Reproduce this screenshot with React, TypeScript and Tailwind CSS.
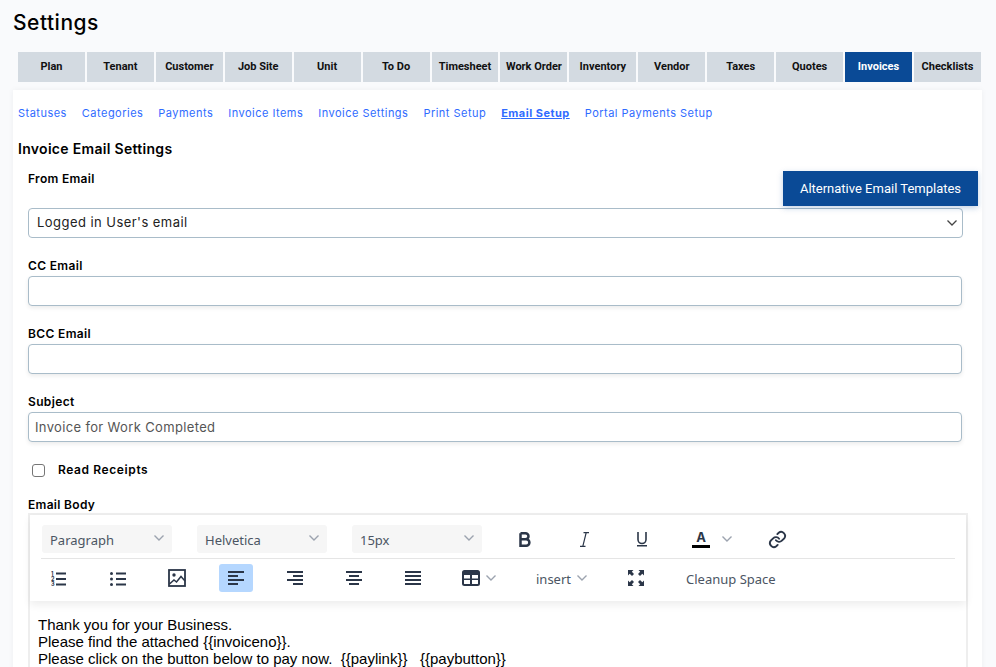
import React from "react";

const tabs = ["Plan","Tenant","Customer","Job Site","Unit","To Do","Timesheet","Work Order","Inventory","Vendor","Taxes","Quotes","Invoices","Checklists"];
const links = ["Statuses","Categories","Payments","Invoice Items","Invoice Settings","Print Setup","Email Setup","Portal Payments Setup"];

const Chevron = ({ className = "" }: { className?: string }) => (
  <svg width="10" height="6" viewBox="0 0 10 6" fill="none" stroke="#9ca3af" strokeWidth="1.4" className={className}><path d="M.5.5L5 5 9.5.5" /></svg>
);
const C = "#2b3648";
const Bars = ({ rows }: { rows: [number, number][] }) => (
  <svg width="16" height="14" viewBox="0 0 16 14" fill={C} className="block">
    {rows.map(([x, w], i) => <rect key={i} x={x} y={i * 4} width={w} height="2" />)}
  </svg>
);

const Field = ({ label, value }: { label: string; value?: string }) => (
  <div className="mt-[19px] w-[934px]">
    <div className="text-[12px] leading-[18px] font-semibold text-black tracking-[0.35px]">{label}</div>
    <div className="mt-[1px] h-[30px] rounded-[4px] border border-[#a9bcc9] bg-white shadow-[0_2px_4px_rgba(0,0,0,0.08)] pl-[6px] pt-[2px] flex items-center text-[13px] text-[#555] tracking-[0.35px]">{value}</div>
  </div>
);

const Select = ({ label }: { label: string }) => (
  <div className="w-[130px] h-[28px] rounded-[3px] bg-[#f6f6f6] flex items-center justify-between pl-[8px] pr-[8px] text-[13px] text-[#4b5563] font-['Noto_Sans',sans-serif]">
    <span className="mt-[4px]">{label}</span><Chevron className="mb-[2px]" />
  </div>
);

export default function App() {
  return (
    <div className="w-[996px] h-[667px] overflow-hidden bg-[#f9fafc] font-['Inter','Noto_Sans',sans-serif]">
      <h1 className="pl-[13px] pt-[10px] text-[21px] leading-[26px] font-medium text-black tracking-[0.5px]">Settings</h1>
      <div className="ml-[18px] mt-[16px] w-[963px] flex gap-[2px] font-['Roboto',sans-serif]">
        {tabs.map((t) => (
          <div key={t} className={`flex-1 h-[30px] flex items-center justify-center text-[11px] font-bold whitespace-nowrap ${t === "Invoices" ? "bg-[#0a4a96] text-white" : "bg-[#d3dae1] text-[#111]"}`}>{t}</div>
        ))}
      </div>
      <div className="ml-[13px] mt-[8px] w-[969px] h-[600px] bg-white shadow-[0_0_6px_rgba(0,0,0,0.05)] overflow-hidden">
        <div className="pl-[5px] pt-[16px] flex gap-[15px] text-[11px] leading-[14px] text-[#2f6bff] tracking-[0.48px]">
          {links.map((l) => (
            <span key={l} className={l === "Email Setup" ? "font-bold underline" : ""}>{l}</span>
          ))}
        </div>
        <h2 className="pl-[5px] mt-[20px] text-[14px] leading-[18px] font-semibold text-black tracking-[0.3px]">Invoice Email Settings</h2>
        <div className="pl-[15px]">
          <div className="flex items-start justify-between w-[950px] mt-[13px]">
            <div className="-mt-[1px] text-[12px] leading-[18px] font-semibold text-black tracking-[0.3px]">From Email</div>
            <div className="w-[195px] h-[35px] bg-[#0a4a96] text-white flex items-center justify-center text-[13px] font-['Roboto',sans-serif] shadow-[0_2px_6px_rgba(10,74,150,0.25)]">Alternative Email Templates</div>
          </div>
          <div className="mt-[2px] w-[935px] h-[30px] rounded-[4px] border border-[#a9bcc9] flex items-center justify-between pl-[8px] pr-[5px] text-[13px] text-[#222] tracking-[0.45px]">
            <span>Logged in User's email</span>
            <svg width="10" height="6" viewBox="0 0 10 6" fill="none" stroke="#444" strokeWidth="1.3"><path d="M.5.5L5 5 9.5.5" /></svg>
          </div>
          <Field label="CC Email" />
          <Field label="BCC Email" />
          <Field label="Subject" value="Invoice for Work Completed" />
          <div className="mt-[20px] flex items-center h-[16px]">
            <div className="ml-[4px] w-[13px] h-[13px] rounded-[3px] border-[1.5px] border-[#767676] bg-white" />
            <span className="ml-[13px] text-[12px] font-semibold text-black tracking-[0.6px]">Read Receipts</span>
          </div>
          <div className="mt-[18px] text-[12px] leading-[18px] font-semibold text-black tracking-[0.3px]">Email Body</div>
          <div className="-mt-[1px] w-[940px] h-[200px] border-2 border-[#eeeeee] border-b-0">
            <div className="h-[86px] bg-white shadow-[0_4px_8px_rgba(0,0,0,0.07)] px-[12px] pt-[10px] font-['Noto_Sans',sans-serif]">
              <div className="flex items-center h-[28px]">
                <Select label="Paragraph" />
                <div className="ml-[25px]"><Select label="Helvetica" /></div>
                <div className="ml-[25px]"><Select label="15px" /></div>
                <svg className="ml-[37px]" width="12" height="15" viewBox="0 0 12 15" fill="none" stroke={C} strokeWidth="2.5"><path d="M1.5 1.300h5a3 3 0 010 6h-5m0 0h5.700a3.100 3.100 0 010 6.400H1.500zM1.500 1.300v12.400" /></svg>
                <svg className="ml-[49px]" width="9" height="15" viewBox="0 0 9 15" fill="none" stroke={C} strokeWidth="1.2"><path d="M3.500 .6H9M0 14.400h5.500M6.200 .6L2.800 14.400" /></svg>
                <svg className="ml-[48px]" width="10" height="15" viewBox="0 0 10 15" fill="none" stroke={C} strokeWidth="1.6"><path d="M1 0v7.500a4 4 0 008 0V0M0 13.800h10" /></svg>
                <div className="ml-[45px] flex flex-col items-center w-[18px] h-[17px] relative">
                  <span className="text-[13px] leading-[13px] font-bold text-[#2b3648] font-['Inter',sans-serif]">A</span>
                  <span className="absolute bottom-0 w-[18px] h-[3px] bg-black" />
                </div>
                <Chevron className="ml-[12px]" />
                <svg className="ml-[36px]" width="19" height="19" viewBox="0 0 24 24" fill="none" stroke={C} strokeWidth="2.4" strokeLinecap="round"><path d="M10 13a5 5 0 007.500.5l3-3a5 5 0 00-7-7l-1.700 1.700" /><path d="M14 11a5 5 0 00-7.500-.5l-3 3a5 5 0 007 7l1.700-1.700" /></svg>
              </div>
              <div className="mt-[5px] border-t border-[#e5e5e5] w-[914px] -ml-[1px]" />
              <div className="flex items-center h-[28px] mt-[5px]">
                <svg className="ml-[9px] shrink-0" width="15" height="15" viewBox="0 0 15 15" fill={C}>
                  <rect x="5" y="1.500" width="10" height="2" /><rect x="5" y="7" width="10" height="2" /><rect x="5" y="12.500" width="10" height="2" />
                  <text x="0" y="4.500" fontSize="5.500" fontWeight="700" fontFamily="Inter, sans-serif">1</text>
                  <text x="0" y="10" fontSize="5.500" fontWeight="700" fontFamily="Inter, sans-serif">2</text>
                  <text x="0" y="15" fontSize="5.500" fontWeight="700" fontFamily="Inter, sans-serif">3</text>
                </svg>
                <svg className="ml-[44px] shrink-0" width="16" height="15" viewBox="0 0 16 15" fill={C}>
                  <rect x="6" y="1.500" width="10" height="2" /><rect x="6" y="7" width="10" height="2" /><rect x="6" y="12.500" width="10" height="2" />
                  <circle cx="1.500" cy="2.500" r="1.500" /><circle cx="1.500" cy="8" r="1.500" /><circle cx="1.500" cy="13.500" r="1.500" />
                </svg>
                <svg className="ml-[42px] shrink-0" width="18" height="18" viewBox="0 0 18 18" fill="none" stroke={C} strokeWidth="1.8"><rect x="1" y="1" width="16" height="16" /><circle cx="6" cy="6" r="1.700" fill={C} stroke="none" /><path d="M1.500 15l4.500-4 2.500 2 4.500-5.500 4 4.500" strokeWidth="1.500" /></svg>
                <div className="ml-[33px] w-[34px] h-[28px] rounded-[3px] bg-[#b5d7ff] flex items-center justify-center shrink-0">
                  <Bars rows={[[0,16],[0,10],[0,16],[0,10]]} />
                </div>
                <div className="ml-[34px]"><Bars rows={[[0,16],[6,10],[0,16],[6,10]]} /></div>
                <div className="ml-[43px]"><Bars rows={[[0,16],[3,10],[0,16],[3,10]]} /></div>
                <div className="ml-[43px]"><Bars rows={[[0,16],[0,16],[0,16],[0,16]]} /></div>
                <svg className="ml-[41px] shrink-0" width="18" height="16" viewBox="0 0 18 16" fill={C}>
                  <path fillRule="evenodd" d="M2.500 0h13A2.500 2.500 0 0118 2.500v11a2.500 2.500 0 01-2.500 2.500h-13A2.500 2.500 0 010 13.500v-11A2.500 2.500 0 012.500 0zM2 5v3.500h6V5zm8 0v3.500h6V5zM2 10v3.500a.5.5 0 00.5.5H8v-4zm8 0v4h5.500a.5.5 0 00.5-.5V10z" />
                </svg>
                <Chevron className="ml-[6px] shrink-0" />
                <span className="ml-[40px] mt-[4px] w-[36px] text-[13px] text-[#4b5563]">insert</span>
                <Chevron className="ml-[5px] shrink-0" />
                <svg className="ml-[41px] shrink-0" width="16" height="16" viewBox="0 0 16 16" fill={C}>
                  <path d="M0 0h5.500L3.800 1.700 6 4 4 6 1.700 3.800 0 5.500zM16 0v5.500l-1.700-1.700L12 6l-2-2 2.200-2.300L10.500 0zM0 16v-5.500l1.700 1.700L4 10l2 2-2.200 2.300L5.500 16zM16 16h-5.500l1.700-1.700L10 12l2-2 2.300 2.200L16 10.500z" />
                </svg>
                <span className="ml-[42px] mt-[4px] text-[13px] text-[#4b5563]">Cleanup Space</span>
              </div>
            </div>
            <div className="pl-[8px] pt-[15px] text-[15px] leading-[17px] text-black font-['Liberation_Sans',Arial,sans-serif]">
              <p>Thank you for your Business.</p>
              <p>Please find the attached {"{{invoiceno}}"}.</p>
              <p className="whitespace-pre">Please click on the button below to pay now.  {"{{paylink}}"}   {"{{paybutton}}"}</p>
            </div>
          </div>
        </div>
      </div>
    </div>
  );
}
